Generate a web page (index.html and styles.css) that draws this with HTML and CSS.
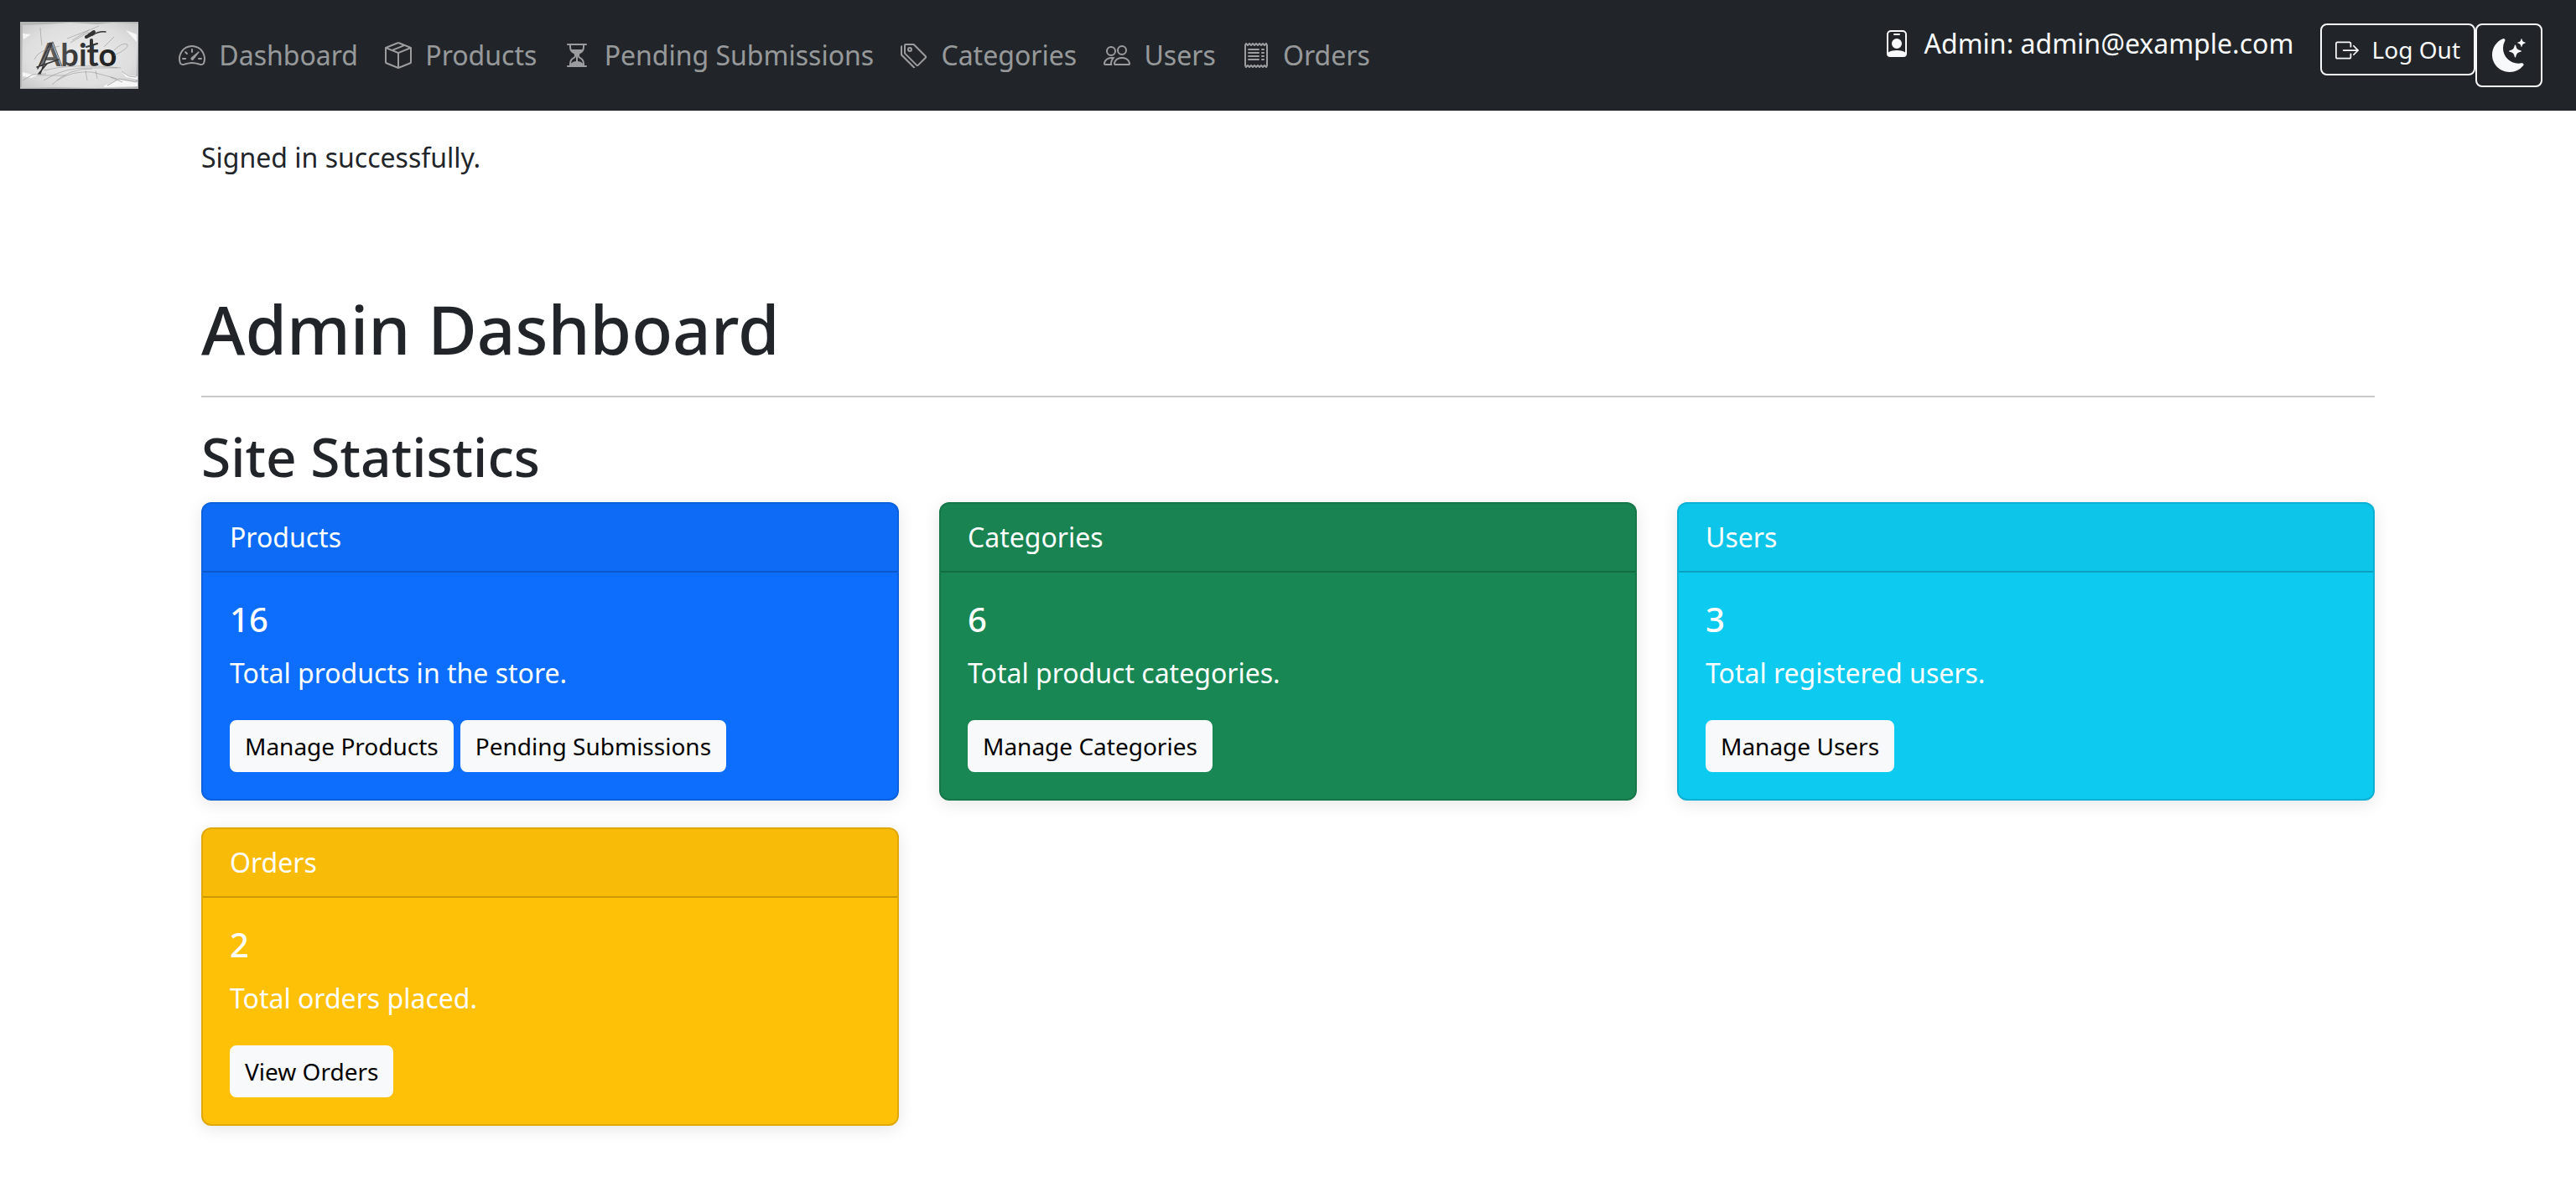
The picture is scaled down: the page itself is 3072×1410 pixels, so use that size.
FILE: index.html
```
<!DOCTYPE html>
<html lang="en">
<head>
<meta charset="utf-8">
<meta name="viewport" content="width=device-width, initial-scale=1">
<title>Admin Dashboard</title>
<link rel="stylesheet" href="styles.css">
</head>
<body>
<nav class="navbar">
  <a class="brand" href="#" aria-label="Abito">
    <svg class="brand-logo" viewBox="0 0 141 80">
      <defs>
        <radialGradient id="paper" cx="50%" cy="50%" r="70%">
          <stop offset="0" stop-color="#ebebeb"/>
          <stop offset=".65" stop-color="#dedede"/>
          <stop offset="1" stop-color="#c6c6c6"/>
        </radialGradient>
        <linearGradient id="ink" x1="0" x2="1" y1="0" y2="0">
          <stop offset="0" stop-color="#777"/>
          <stop offset=".45" stop-color="#3a3a3a"/>
          <stop offset="1" stop-color="#1c1c1c"/>
        </linearGradient>
      </defs>
      <rect width="141" height="80" fill="url(#paper)"/>
      <path d="M0 0h141v2L110 1 92 3 60 1 30 3 3 4 2 78H0zM141 6v74H0v-1l40-1 50 1 48-1z" fill="#b4b4b4"/>
      <path d="M3 14l10 1-9 6zM3 60l12 3 12-2-14 6-10-2zM100 76l18-7 22 3v5l-40 1zM120 58l10 6 10 1v4l-14-3zM126 10l13 5v9z" fill="#f6f6f6"/>
      <path d="M104 76l14-8 21 4M121 59l9 6 9 1M3 70l12-7 16-1M108 66l14 6" fill="none" stroke="#b0b0b0"/>
      <text class="brand-word" x="22" y="53" fill="url(#ink)">Abito</text>
      <g fill="none" stroke="#333" stroke-linecap="round">
        <path d="M38 25L24 62M36 25L21 56M20 54l26-9M22 62l10-12" stroke-width="1.500"/>
        <path d="M39 24L50 53" stroke="#555"/>
        <path d="M79 18l8-4M82 16l6-4" stroke-width="4"/>
        <path d="M86 16q8-5 16-4" stroke-width="1.500"/>
        <path d="M85 22v14" stroke-width="4"/>
        <path d="M79 30l13-4" stroke-width="2"/>
      </g>
      <g fill="none" stroke="#888" stroke-width=".5">
        <path d="M24 7l1 13 1 8M20 64l34 0M28 70q26-17 58-15l30 0M38 75q20-20 48-19M44 70q18-12 42-10l30 8M28 58q35-9 92-3M17 45q3-11 30-16M56 20l26-10 12-5M60 25l22-13M62 22l20-12M112 34q10-10 16-7 2 5-16 13M78 58l2 12M90 58l2 10M100 30l12-12"/>
      </g>
    </svg>
  </a>
  <div class="nav-links">
    <a class="nav-link" href="#"><svg class="icon" viewBox="0 0 16 16"><path d="M8 4a.5.5 0 0 1 .5.5V6a.5.5 0 0 1-1 0V4.500A.5.5 0 0 1 8 4M3.732 5.732a.5.5 0 0 1 .707 0l.915.914a.5.5 0 1 1-.708.708l-.914-.915a.5.5 0 0 1 0-.707M2 10a.5.5 0 0 1 .5-.5h1.586a.5.5 0 0 1 0 1H2.500A.5.5 0 0 1 2 10m9.500 0a.5.5 0 0 1 .5-.5h1.500a.5.5 0 0 1 0 1H12a.5.5 0 0 1-.5-.5m.754-4.246a.39.39 0 0 0-.527-.02L7.547 9.310a.91.91 0 1 0 1.302 1.258l3.434-4.297a.39.39 0 0 0-.029-.518z"/><path fill-rule="evenodd" d="M0 10a8 8 0 1 1 15.547 2.661c-.442 1.253-1.845 1.602-2.932 1.250C11.309 13.488 9.475 13 8 13c-1.474 0-3.310.488-4.615.911-1.087.352-2.490.003-2.932-1.250A8 8 0 0 1 0 10m8-7a7 7 0 0 0-6.603 9.329c.203.575.923.876 1.680.63C4.397 12.533 6.358 12 8 12s3.604.532 4.923.96c.757.245 1.477-.056 1.680-.631A7 7 0 0 0 8 3"/></svg> Dashboard</a>
    <a class="nav-link" href="#"><svg class="icon" viewBox="0 0 16 16"><path d="M8.186 1.113a.5.5 0 0 0-.372 0L1.846 3.500l2.404.961L10.404 2zm3.564 1.426L5.596 5 8 5.961 14.154 3.500zm3.250 1.700-6.500 2.600v7.922l6.500-2.600V4.240zM7.500 14.762V6.838L1 4.239v7.923zM7.443.184a1.500 1.500 0 0 1 1.114 0l7.129 2.852A.5.5 0 0 1 16 3.500v8.662a1 1 0 0 1-.629.928l-7.185 2.874a.5.5 0 0 1-.372 0L.63 13.090a1 1 0 0 1-.63-.928V3.500a.5.5 0 0 1 .314-.464z"/></svg> Products</a>
    <a class="nav-link" href="#"><svg class="icon" viewBox="0 0 16 16"><path d="M2.500 15a.5.5 0 1 1 0-1h1v-1a4.500 4.500 0 0 1 2.557-4.060c.29-.139.443-.377.443-.59v-.7c0-.213-.154-.451-.443-.59A4.500 4.500 0 0 1 3.500 3V2h-1a.5.5 0 0 1 0-1h11a.5.5 0 0 1 0 1h-1v1a4.500 4.500 0 0 1-2.557 4.060c-.29.139-.443.377-.443.59v.7c0 .213.154.451.443.59A4.500 4.500 0 0 1 12.500 13v1h1a.5.5 0 0 1 0 1zm2-13v1c0 .537.12 1.045.337 1.500h6.326c.216-.455.337-.963.337-1.500V2zm3 6.350c0 .701-.478 1.236-1.011 1.492A3.500 3.500 0 0 0 4.500 13s.866-1.299 3-1.480zm1 0v3.170c2.134.181 3 1.480 3 1.480a3.500 3.500 0 0 0-1.989-3.158C8.978 9.586 8.500 9.052 8.500 8.351z"/></svg> Pending Submissions</a>
    <a class="nav-link" href="#"><svg class="icon" viewBox="0 0 16 16"><path d="M3 2v4.586l7 7L14.586 9l-7-7zM2 2a1 1 0 0 1 1-1h4.586a1 1 0 0 1 .707.293l7 7a1 1 0 0 1 0 1.414l-4.586 4.586a1 1 0 0 1-1.414 0l-7-7A1 1 0 0 1 2 6.586z"/><path d="M5.500 5a.5.5 0 1 1 0-1 .5.5 0 0 1 0 1m0 1a1.500 1.500 0 1 0 0-3 1.500 1.500 0 0 0 0 3M1 7.086a1 1 0 0 0 .293.707L8.750 15.250l-.043.043a1 1 0 0 1-1.414 0l-7-7A1 1 0 0 1 0 7.586V3a1 1 0 0 1 1-1z"/></svg> Categories</a>
    <a class="nav-link" href="#"><svg class="icon" viewBox="0 0 16 16"><path d="M15 14s1 0 1-1-1-4-5-4-5 3-5 4 1 1 1 1zm-7.978-1L7 12.996c.001-.264.167-1.030.76-1.720C8.312 10.629 9.282 10 11 10c1.717 0 2.687.63 3.240 1.276.593.69.758 1.457.76 1.720l-.008.002-.014.002zM11 7a2 2 0 1 0 0-4 2 2 0 0 0 0 4m3-2a3 3 0 1 1-6 0 3 3 0 0 1 6 0M6.936 9.280a6 6 0 0 0-1.230-.247A7 7 0 0 0 5 9c-4 0-5 3-5 4q0 1 1 1h4.216A2.240 2.240 0 0 1 5 13c0-1.010.377-2.042 1.090-2.904.243-.294.526-.569.846-.816M4.920 10A5.500 5.500 0 0 0 4 13H1c0-.26.164-1.030.76-1.724.545-.636 1.492-1.256 3.160-1.275ZM1.500 5.500a3 3 0 1 1 6 0 3 3 0 0 1-6 0m3-2a2 2 0 1 0 0 4 2 2 0 0 0 0-4"/></svg> Users</a>
    <a class="nav-link" href="#"><svg class="icon" viewBox="0 0 16 16"><path d="M1.920.506a.5.5 0 0 1 .434.14L3 1.293l.646-.647a.5.5 0 0 1 .708 0L5 1.293l.646-.647a.5.5 0 0 1 .708 0L7 1.293l.646-.647a.5.5 0 0 1 .708 0L9 1.293l.646-.647a.5.5 0 0 1 .708 0l.646.647.646-.647a.5.5 0 0 1 .708 0l.646.647.646-.647a.5.5 0 0 1 .801.13l.5 1A.5.5 0 0 1 15 2v12a.5.5 0 0 1-.053.224l-.5 1a.5.5 0 0 1-.8.13L13 14.707l-.646.647a.5.5 0 0 1-.708 0L11 14.707l-.646.647a.5.5 0 0 1-.708 0L9 14.707l-.646.647a.5.5 0 0 1-.708 0L7 14.707l-.646.647a.5.5 0 0 1-.708 0L5 14.707l-.646.647a.5.5 0 0 1-.708 0L3 14.707l-.646.647a.5.5 0 0 1-.801-.13l-.5-1A.5.5 0 0 1 1 14V2a.5.5 0 0 1 .053-.224l.5-1a.5.5 0 0 1 .367-.27m.217 1.338L2 2.118v11.764l.137.274.51-.51a.5.5 0 0 1 .707 0l.646.647.646-.646a.5.5 0 0 1 .708 0l.646.646.646-.646a.5.5 0 0 1 .708 0l.646.646.646-.646a.5.5 0 0 1 .708 0l.646.646.646-.646a.5.5 0 0 1 .708 0l.646.646.646-.646a.5.5 0 0 1 .708 0l.509.509.137-.274V2.118l-.137-.274-.51.51a.5.5 0 0 1-.707 0L12 1.707l-.646.647a.5.5 0 0 1-.708 0L10 1.707l-.646.647a.5.5 0 0 1-.708 0L8 1.707l-.646.647a.5.5 0 0 1-.708 0L6 1.707l-.646.647a.5.5 0 0 1-.708 0L4 1.707l-.646.647a.5.5 0 0 1-.708 0z"/><path d="M3 4.500a.5.5 0 0 1 .5-.5h6a.5.5 0 1 1 0 1h-6a.5.5 0 0 1-.5-.5m0 2a.5.5 0 0 1 .5-.5h6a.5.5 0 1 1 0 1h-6a.5.5 0 0 1-.5-.5m0 2a.5.5 0 0 1 .5-.5h6a.5.5 0 1 1 0 1h-6a.5.5 0 0 1-.5-.5m0 2a.5.5 0 0 1 .5-.5h6a.5.5 0 0 1 0 1h-6a.5.5 0 0 1-.5-.5m8-6a.5.5 0 0 1 .5-.5h1a.5.5 0 0 1 0 1h-1a.5.5 0 0 1-.5-.5m0 2a.5.5 0 0 1 .5-.5h1a.5.5 0 0 1 0 1h-1a.5.5 0 0 1-.5-.5m0 2a.5.5 0 0 1 .5-.5h1a.5.5 0 0 1 0 1h-1a.5.5 0 0 1-.5-.5m0 2a.5.5 0 0 1 .5-.5h1a.5.5 0 0 1 0 1h-1a.5.5 0 0 1-.5-.5"/></svg> Orders</a>
  </div>
  <div class="account">
    <span class="account-name"><svg class="icon" viewBox="0 0 16 16"><path d="M6.500 2a.5.5 0 0 0 0 1h3a.5.5 0 0 0 0-1zM11 8a3 3 0 1 1-6 0 3 3 0 0 1 6 0"/><path d="M4.500 0A2.500 2.500 0 0 0 2 2.500V14a2 2 0 0 0 2 2h8a2 2 0 0 0 2-2V2.500A2.500 2.500 0 0 0 11.500 0zM3 2.500A1.500 1.500 0 0 1 4.500 1h7A1.500 1.500 0 0 1 13 2.500v10.795a4.200 4.200 0 0 0-.776-.492C11.392 12.387 10.063 12 8 12s-3.392.387-4.224.803a4.200 4.200 0 0 0-.776.492z"/></svg> Admin: admin@example.com</span>
    <button class="btn btn-outline" type="button"><svg class="icon" viewBox="0 0 16 16"><path fill-rule="evenodd" d="M10 12.500a.5.5 0 0 1-.5.5h-8a.5.5 0 0 1-.5-.5v-9a.5.5 0 0 1 .5-.5h8a.5.5 0 0 1 .5.5v2a.5.5 0 0 0 1 0v-2A1.500 1.500 0 0 0 9.500 2h-8A1.500 1.500 0 0 0 0 3.500v9A1.500 1.500 0 0 0 1.500 14h8a1.500 1.500 0 0 0 1.500-1.500v-2a.5.5 0 0 0-1 0z"/><path fill-rule="evenodd" d="M15.854 8.354a.5.5 0 0 0 0-.708l-3-3a.5.5 0 0 0-.708.708L14.293 7.500H5.500a.5.5 0 0 0 0 1h8.793l-2.147 2.146a.5.5 0 0 0 .708.708z"/></svg> Log Out</button>
    <button class="btn btn-outline theme-toggle" type="button" aria-label="Toggle theme"><svg class="theme-icon" viewBox="0 0 16 16"><path d="M6 .278a.77.77 0 0 1 .08.858 7.200 7.200 0 0 0-.878 3.460c0 4.021 3.278 7.277 7.318 7.277q.792-.001 1.533-.16a.79.79 0 0 1 .81.316.73.73 0 0 1-.031.893A8.350 8.350 0 0 1 8.344 16C3.734 16 0 12.286 0 7.710 0 4.266 2.114 1.312 5.124.06A.75.75 0 0 1 6 .278"/><path d="M10.794 3.148a.217.217 0 0 1 .412 0l.387 1.162c.173.518.579.924 1.097 1.097l1.162.387a.217.217 0 0 1 0 .412l-1.162.387a1.730 1.730 0 0 0-1.097 1.097l-.387 1.162a.217.217 0 0 1-.412 0l-.387-1.162A1.730 1.730 0 0 0 9.310 6.593l-1.162-.387a.217.217 0 0 1 0-.412l1.162-.387a1.730 1.730 0 0 0 1.097-1.097zM13.863.099a.145.145 0 0 1 .274 0l.258.774c.115.346.386.617.732.732l.774.258a.145.145 0 0 1 0 .274l-.774.258a1.160 1.160 0 0 0-.732.732l-.258.774a.145.145 0 0 1-.274 0l-.258-.774a1.160 1.160 0 0 0-.732-.732l-.774-.258a.145.145 0 0 1 0-.274l.774-.258c.346-.115.617-.386.732-.732z"/></svg></button>
  </div>
</nav>
<main class="container">
  <p class="notice">Signed in successfully.</p>
  <h1 class="page-title">Admin Dashboard</h1>
  <hr class="divider">
  <h2 class="section-title">Site Statistics</h2>
  <div class="cards">
    <section class="card card-products">
      <div class="card-header">Products</div>
      <div class="card-body">
        <h5 class="card-count">16</h5>
        <p class="card-text">Total products in the store.</p>
        <div class="card-actions"><a class="btn btn-light" href="#">Manage Products</a><a class="btn btn-light" href="#">Pending Submissions</a></div>
      </div>
    </section>
    <section class="card card-categories">
      <div class="card-header">Categories</div>
      <div class="card-body">
        <h5 class="card-count">6</h5>
        <p class="card-text">Total product categories.</p>
        <div class="card-actions"><a class="btn btn-light" href="#">Manage Categories</a></div>
      </div>
    </section>
    <section class="card card-users">
      <div class="card-header">Users</div>
      <div class="card-body">
        <h5 class="card-count">3</h5>
        <p class="card-text">Total registered users.</p>
        <div class="card-actions"><a class="btn btn-light" href="#">Manage Users</a></div>
      </div>
    </section>
    <section class="card card-orders">
      <div class="card-header">Orders</div>
      <div class="card-body">
        <h5 class="card-count">2</h5>
        <p class="card-text">Total orders placed.</p>
        <div class="card-actions"><a class="btn btn-light" href="#">View Orders</a></div>
      </div>
    </section>
  </div>
</main>
</body>
</html>
```
FILE: styles.css
```
* {
  box-sizing: border-box;
}

body {
  margin: 0;
  background: #fff;
  color: #212529;
  font-family: "Noto Sans", "Liberation Sans", sans-serif;
  font-size: 32px;
  line-height: 48px;
}

h1, h2, h5, p {
  margin: 0;
}

.navbar {
  display: flex;
  align-items: center;
  padding: 16px 24px;
  background: #212529;
}

.brand {
  display: flex;
  margin-right: 32px;
  padding: 10px 0;
}

.brand-logo {
  width: 141px;
  height: 80px;
}

.brand-word {
  font-family: Lato, "Noto Sans", sans-serif;
  font-size: 38px;
  font-weight: 700;
}

.nav-links {
  display: flex;
  flex: 1;
}

.nav-link {
  padding: 16px;
  color: rgba(255, 255, 255, .55);
  text-decoration: none;
  white-space: nowrap;
}

.icon {
  width: 1em;
  height: 1em;
  margin-right: 8px;
  fill: currentColor;
  vertical-align: -.125em;
}

.account {
  display: flex;
  align-items: flex-start;
  margin-right: 16px;
  color: #f8f9fa;
}

.account-name {
  margin-right: 32px;
  white-space: nowrap;
}

.btn {
  padding: 8px 16px;
  border: 2px solid;
  border-radius: 8px;
  font-family: inherit;
  font-size: 28px;
  line-height: 42px;
  text-decoration: none;
  white-space: nowrap;
}

.btn-outline {
  border-color: #f8f9fa;
  background: transparent;
  color: #f8f9fa;
}

.btn-light {
  border-color: #f8f9fa;
  background: #f8f9fa;
  color: #000;
}

.theme-toggle {
  display: flex;
  padding: 16px 18px;
}

.theme-icon {
  width: 40px;
  height: 40px;
  fill: currentColor;
}

.container {
  max-width: 2640px;
  margin: 0 auto;
  padding: 32px 24px;
}

.notice {
  margin-bottom: 132px;
}

.page-title {
  font-size: 80px;
  font-weight: 500;
  line-height: 96px;
}

.divider {
  margin: 32px 0;
  border: 0;
  border-top: 2px solid #c8c9ca;
}

.section-title {
  margin-bottom: 16px;
  font-size: 64px;
  font-weight: 500;
  line-height: 77px;
}

.cards {
  display: grid;
  grid-template-columns: repeat(3, 1fr);
  gap: 32px 48px;
}

.card {
  border: 2px solid rgba(0, 0, 0, .125);
  border-radius: 12px;
  box-shadow: 0 4px 20px rgba(0, 0, 0, .1);
  color: #fff;
}

.card-products {
  background: #0d6efd;
}

.card-categories {
  background: #198754;
}

.card-users {
  background: #0dcaf0;
}

.card-orders {
  background: #ffc107;
}

.card-header {
  padding: 16px 32px;
  border-bottom: 2px solid rgba(0, 0, 0, .175);
  border-radius: 10px 10px 0 0;
  background: rgba(33, 37, 41, .03);
}

.card-body {
  padding: 32px;
}

.card-count {
  margin-bottom: 16px;
  font-size: 40px;
  font-weight: 500;
  line-height: 48px;
}

.card-text {
  margin-bottom: 32px;
}

.card-actions {
  display: flex;
  gap: 8px;
}
```
